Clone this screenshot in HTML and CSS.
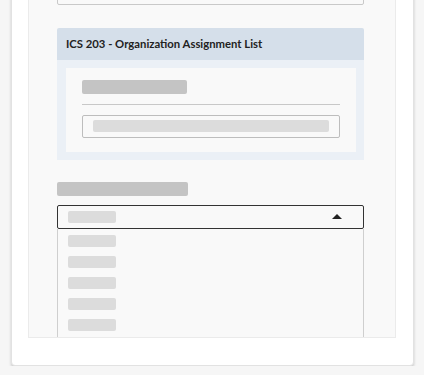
FILE: index.html
```html
<!DOCTYPE html>
<html lang="en">
<head>
  <meta charset="UTF-8">
  <meta name="viewport" content="width=device-width, initial-scale=1.0">
  <title>ICS 203 Form</title>
  <link rel="stylesheet" href="styles.css">
</head>
<body>
  <div class="card">
    <div class="panel">
      <div class="field-input"></div>

      <section class="ics">
        <h2 class="ics-title">ICS 203 - Organization Assignment List</h2>
        <div class="ics-body">
          <div class="ics-inner">
            <div class="skel skel-label"></div>
            <hr class="divider">
            <div class="ics-input">
              <div class="skel skel-value"></div>
            </div>
          </div>
        </div>
      </section>

      <div class="skel skel-label wide"></div>
      <div class="select">
        <div class="skel skel-option"></div>
        <span class="caret"></span>
      </div>
      <ul class="options">
        <li><div class="skel skel-option"></div></li>
        <li><div class="skel skel-option"></div></li>
        <li><div class="skel skel-option"></div></li>
        <li><div class="skel skel-option"></div></li>
        <li><div class="skel skel-option"></div></li>
        <li><div class="skel skel-option"></div></li>
      </ul>
    </div>
  </div>
</body>
</html>
```

FILE: styles.css
```css
body {
  margin: 0;
  background: #f6f6f6;
  font-family: Lato, "Open Sans", Arial, sans-serif;
  color: #222;
}

.card {
  width: 403px;
  margin: -40px 0 0 11px;
  background: #fff;
  border: 1px solid #e2e2e2;
  border-radius: 4px;
  box-shadow: 0 2px 3px rgba(0, 0, 0, 0.18);
  padding: 0 17px 27px 16px;
  box-sizing: border-box;
}

.panel {
  height: 377px;
  overflow: hidden;
  background: #f9f9f9;
  border: 1px solid #ebebeb;
  border-top: none;
  padding: 11px 31px 0 28px;
  box-sizing: border-box;
}

.field-input {
  height: 33px;
  border: 1px solid #c9c9c9;
  border-radius: 2px;
  box-sizing: border-box;
}

.skel {
  border-radius: 2px;
  background: #dcdcdc;
}

.skel-label {
  width: 105px;
  height: 14px;
  background: #c4c4c4;
}

.skel-label.wide {
  width: 131px;
  margin-top: 22px;
}

.ics {
  margin-top: 23px;
}

.ics-title {
  margin: 0;
  height: 32px;
  line-height: 31px;
  padding-left: 9px;
  background: #d5dfea;
  border-radius: 2px 2px 0 0;
  font-size: 11.3px;
  font-weight: 700;
}

.ics-body {
  background: #ebf0f6;
  padding: 8px 8px 8px 9px;
}

.ics-inner {
  background: #f9f9f9;
  padding: 12px 16px 14px;
}

.divider {
  border: none;
  border-top: 1px solid #c8c8c8;
  margin: 10px 0 0;
}

.ics-input {
  margin-top: 10px;
  height: 23px;
  border: 1px solid #bdbdbd;
  border-radius: 2px;
  padding: 4px 10px;
  box-sizing: border-box;
}

.skel-value {
  height: 12px;
}

.select {
  margin-top: 9px;
  height: 24px;
  border: 1px solid #333;
  border-radius: 2px;
  padding: 0 21px 0 10px;
  box-sizing: border-box;
  display: flex;
  align-items: center;
  justify-content: space-between;
}

.skel-option {
  width: 48px;
  height: 12px;
}

.caret {
  width: 0;
  height: 0;
  border-left: 5px solid transparent;
  border-right: 5px solid transparent;
  border-bottom: 5px solid #222;
  margin-top: -2px;
}

.options {
  list-style: none;
  margin: 0;
  padding: 6px 10px 0;
  border: 1px solid #cfcfcf;
  border-top: none;
  display: flex;
  flex-direction: column;
  gap: 9px;
  height: 160px;
}
```
